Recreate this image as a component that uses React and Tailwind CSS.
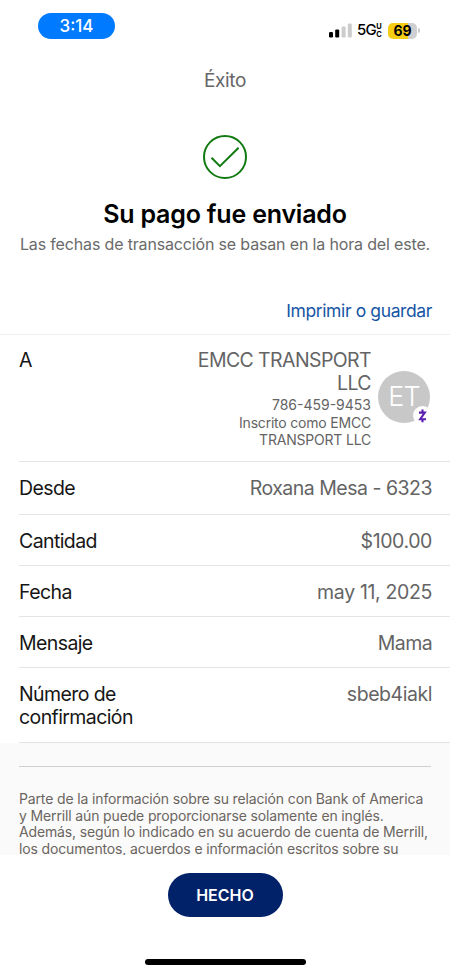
import clsx from 'clsx';

const details = [
  { label: 'Desde', value: 'Roxana Mesa - 6323', height: 'h-[53px]', valueClass: 'tracking-[-0.5px]' },
  { label: 'Cantidad', value: '$100.00', height: 'h-[51px]', valueClass: 'tracking-[-0.4px]' },
  { label: 'Fecha', value: 'may 11, 2025', height: 'h-[51px]', valueClass: 'tracking-[-0.35px]' },
  { label: 'Mensaje', value: 'Mama', height: 'h-[51px]', valueClass: 'tracking-[-0.6px]' },
];

function StatusBar() {
  return (
    <header className="flex h-[52px] shrink-0 items-start justify-between pl-[38px] pr-[30px] pt-[13px]">
      <div className="flex h-[26px] w-[77px] items-center justify-center rounded-full bg-[#007aff] pt-[2px] text-[17px] font-medium text-white">
        3:14
      </div>
      <div className="flex h-[35px] items-center">
        <svg width="23" height="15" viewBox="0 0 23 15">
          <rect x="0" y="9" width="4" height="5.5" rx="1.2" fill="#000" />
          <rect x="6.2" y="6.4" width="4" height="8.1" rx="1.2" fill="#000" />
          <rect x="12.6" y="3.6" width="4" height="10.9" rx="1.2" fill="#ccc" />
          <rect x="18.8" y="0.5" width="4" height="14" rx="1.2" fill="#ccc" />
        </svg>
        <span className="ml-[5px] w-[19px] text-[15px] font-medium tracking-[-0.8px]">5G</span>
        <span className="flex w-[6px] flex-col text-center text-[7.5px] font-bold leading-[7.5px]">
          <span>U</span>
          <span>C</span>
        </span>
        <div className="ml-[6px] flex h-4 w-[29px] items-center justify-center rounded-[5px] bg-linear-to-r from-[#f7cd14] from-69% to-[#cfcfd1] to-69% text-[14px] font-bold">
          69
        </div>
        <div className="ml-px h-[5px] w-[2px] rounded-r-full bg-[#c8c8c8]" />
      </div>
    </header>
  );
}

function Avatar() {
  return (
    <div className="relative ml-[7px] mt-[36px] flex size-[52px] shrink-0 items-center justify-center rounded-full bg-[#c8c8c8] text-[27px] font-light tracking-[-0.8px] text-white">
      ET
      <div className="absolute left-[35px] top-[35px] flex size-[19px] items-center justify-center rounded-full bg-white">
        <svg width="9" height="14" viewBox="0 0 9 14" fill="none" stroke="#5b1eb0" strokeWidth="2.1">
          <path d="M1 3.6h5.8L2.2 10.2H8M4.5 0.6v3M4.5 10.2v3" />
        </svg>
      </div>
    </div>
  );
}

function Row({ label, value, height, valueClass }) {
  return (
    <div className={clsx('ml-[19px] flex justify-between border-b border-[#e4e4e4] pr-[18px] pt-[15px] text-[19.5px] leading-[23px]', height)}>
      <span className="tracking-[-0.6px] text-[#161616]">{label}</span>
      <span className={clsx('text-right text-[#646464]', valueClass)}>{value}</span>
    </div>
  );
}

export default function App() {
  return (
    <div
      className="flex h-[975px] w-[450px] flex-col overflow-hidden bg-white text-black"
      style={{ fontFamily: 'Inter, sans-serif' }}
    >
      <StatusBar />

      <section className="flex h-[283px] shrink-0 flex-col items-center border-b border-[#eee]">
        <h2 className="mt-[17px] text-[19px] leading-6 tracking-[-0.4px] text-[#666]">Éxito</h2>
        <svg className="mt-[41px]" width="46" height="46" viewBox="0 0 46 46" fill="none" stroke="#117a11" strokeWidth="2">
          <circle cx="23" cy="23" r="21" />
          <path d="M9.5 23.8l8.4 8.4L36.6 13.8" />
        </svg>
        <h1 className="mt-[19px] whitespace-nowrap text-[25px] font-semibold leading-[30px] tracking-[-0.2px]">
          Su pago fue enviado
        </h1>
        <p className="mt-[5px] whitespace-nowrap text-[16px] leading-5 tracking-[-0.16px] text-[#6a6a6a]">
          Las fechas de transacción se basan en la hora del este.
        </p>
        <a className="mr-[18px] mt-[45px] self-end text-[17.5px] leading-6 tracking-[-0.38px] text-[#1555a5]">
          Imprimir o guardar
        </a>
      </section>

      <section className="shrink-0">
        <div className="ml-[19px] flex h-[127px] border-b border-[#e4e4e4] pr-5">
          <span className="mt-[14px] text-[19.5px] leading-[23px] text-[#161616]">A</span>
          <div className="ml-auto pt-[14px] text-right text-[#646464]">
            <p className="text-[19.5px] leading-[23px] tracking-[-0.6px]">
              EMCC TRANSPORT
              <br />
              LLC
            </p>
            <p className="mt-px text-[14px] leading-[18px]">786-459-9453</p>
            <p className="text-[14px] leading-[17px] tracking-[-0.2px]">
              Inscrito como EMCC
              <br />
              TRANSPORT LLC
            </p>
          </div>
          <Avatar />
        </div>
        {details.map((row) => (
          <Row key={row.label} {...row} />
        ))}
        <Row
          label={
            <>
              Número de
              <br />
              confirmación
            </>
          }
          value="sbeb4iakl"
          height="h-[75px]"
          valueClass="tracking-[-0.45px]"
        />
      </section>

      <footer className="h-[112px] shrink-0 overflow-hidden bg-[#fafafa] px-[19px] pt-[23px]">
        <div className="border-t border-[#cfcfcf]" />
        <p className="mt-6 whitespace-nowrap text-[14px] leading-[16.6px] tracking-[-0.14px] text-[#6b655f]">
          Parte de la información sobre su relación con Bank of America
          <br />
          y Merrill aún puede proporcionarse solamente en inglés.
          <br />
          Además, según lo indicado en su acuerdo de cuenta de Merrill,
          <br />
          los documentos, acuerdos e información escritos sobre su
        </p>
      </footer>

      <div className="flex flex-1 flex-col items-center pt-[18px]">
        <button className="h-[44px] w-[115px] rounded-full bg-[#012169] text-[16px] font-semibold text-white">
          HECHO
        </button>
        <div className="mt-[42px] h-[6px] w-[161px] rounded-full bg-black" />
      </div>
    </div>
  );
}
